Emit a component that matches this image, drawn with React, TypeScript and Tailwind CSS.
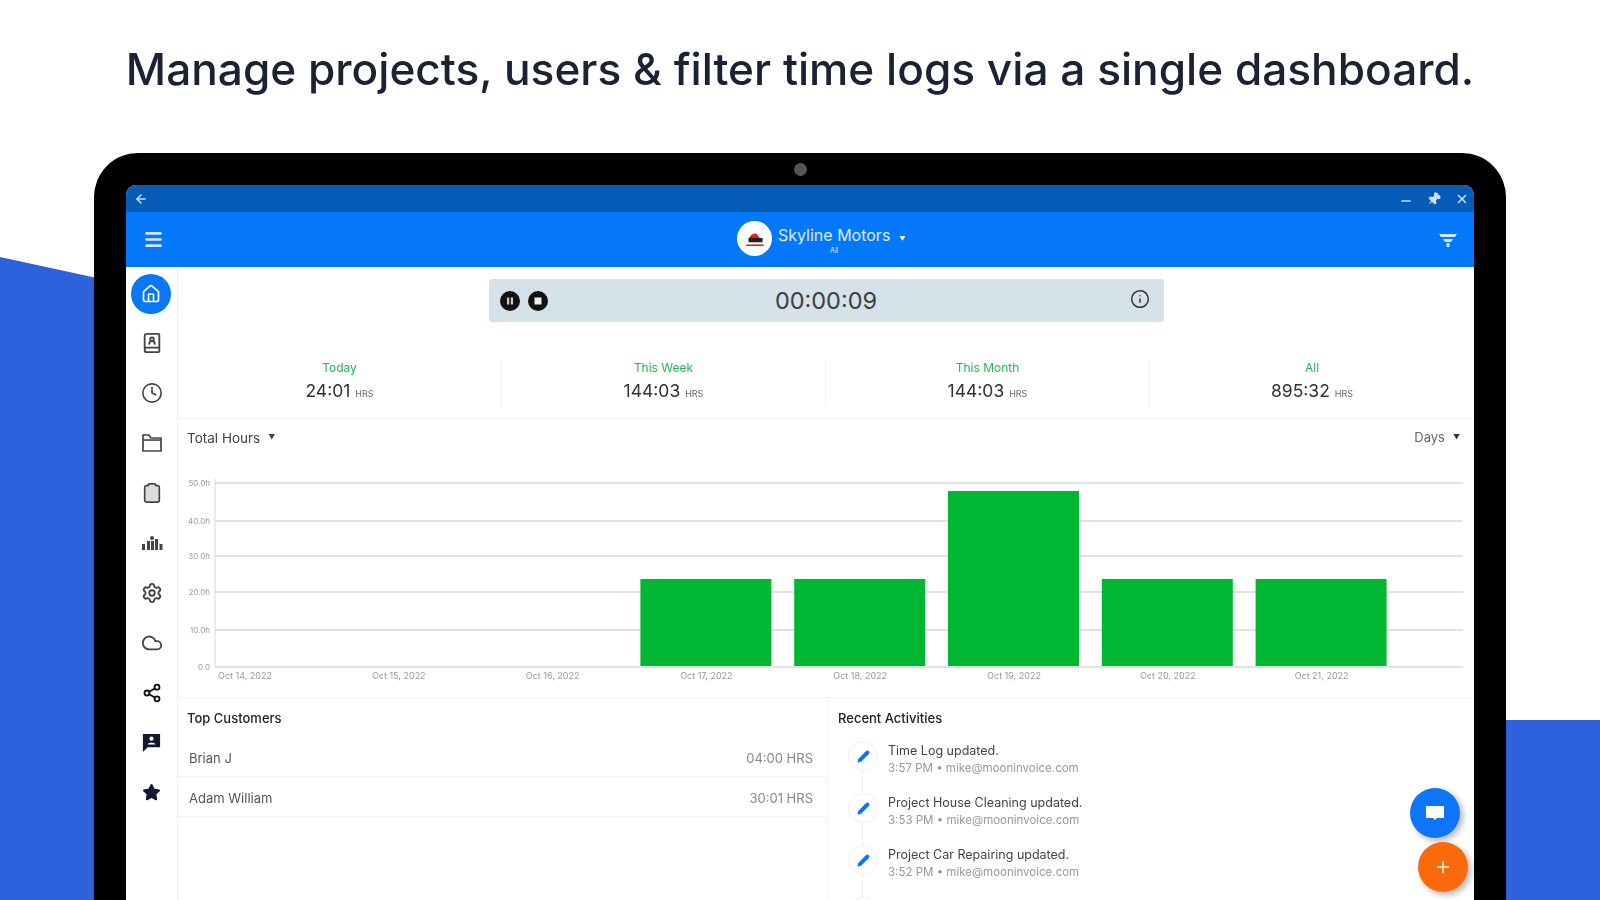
import { ArrowLeft, BookUser, Cloud, Clipboard, Clock, Home, Info, Menu, Minus, Pencil, Pin, Plus, Settings, Share2, Star, X } from "lucide-react";

const stats = [
  { label: "Today", value: "24:01" },
  { label: "This Week", value: "144:03" },
  { label: "This Month", value: "144:03" },
  { label: "All", value: "895:32" },
];
const gridLines = [
  { y: 14, label: "50.0h" },
  { y: 52, label: "40.0h" },
  { y: 87, label: "30.0h" },
  { y: 123, label: "20.0h" },
  { y: 161, label: "10.0h" },
  { y: 198, label: "0.0" },
];
const days = [
  { label: "Oct 14, 2022", hours: 0 },
  { label: "Oct 15, 2022", hours: 0 },
  { label: "Oct 16, 2022", hours: 0 },
  { label: "Oct 17, 2022", hours: 87 },
  { label: "Oct 18, 2022", hours: 87 },
  { label: "Oct 19, 2022", hours: 175 },
  { label: "Oct 20, 2022", hours: 87 },
  { label: "Oct 21, 2022", hours: 87 },
];
const activities = [
  { title: "Time Log updated.", time: "3:57 PM" },
  { title: "Project House Cleaning updated.", time: "3:53 PM" },
  { title: "Project Car Repairing updated.", time: "3:52 PM" },
];

function Sidebar() {
  return (
    <aside className="w-[52px] shrink-0 border-r border-[#f1f1f1] flex flex-col items-center pt-[6px] text-[#444]">
      <div className="h-10 w-10 rounded-full bg-[#0a78f5] flex items-center justify-center mb-[18px] mt-[1px] mr-[1px]">
        <Home className="h-5 w-5 text-white" strokeWidth={2} />
      </div>
      <div className="flex flex-col items-center gap-[28px]">
        <BookUser className="h-[22px] w-[22px]" strokeWidth={2} />
        <Clock className="h-[22px] w-[22px]" strokeWidth={1.8} />
        <svg viewBox="0 0 22 22" className="h-[22px] w-[22px]" fill="none" stroke="#444" strokeWidth="1.7">
          <path d="M2 19V3h6l2 3h10v13z" />
          <path d="M2 8h18" />
        </svg>
        <Clipboard className="h-[22px] w-[22px]" fill="#ddd" strokeWidth={1.8} />
        <svg viewBox="0 0 22 22" className="h-[22px] w-[22px]" fill="#444">
          <rect x="1" y="12" width="3" height="6" />
          <rect x="6" y="9" width="3" height="9" />
          <circle cx="11" cy="6" r="2" />
          <rect x="10" y="9" width="3" height="9" />
          <rect x="14" y="7" width="3" height="11" />
          <rect x="18.5" y="12" width="3" height="6" />
        </svg>
        <Settings className="h-[22px] w-[22px]" strokeWidth={2} />
        <Cloud className="h-[22px] w-[22px]" strokeWidth={2} />
        <Share2 className="h-[20px] w-[20px] my-[1px] text-[#111]" strokeWidth={2.2} />
        <svg viewBox="0 0 22 22" className="h-[21px] w-[21px]">
          <path d="M2 2h18v14H7l-5 5z" fill="#141832" />
          <circle cx="11" cy="7" r="2.2" fill="#fff" />
          <path d="M7 13c0-2.2 8-2.2 8 0z" fill="#fff" />
        </svg>
        <Star className="h-[19px] w-[19px] mt-[2px] text-[#141832]" fill="#141832" strokeWidth={1.5} />
      </div>
    </aside>
  );
}

function TimerBar() {
  return (
    <div className="mt-3 mx-auto w-[675px] h-[43px] rounded-[3px] bg-[#d5e2e9] flex items-center px-[11px] shrink-0">
      <div className="flex flex-1 gap-2">
        <svg viewBox="0 0 20 20" className="h-5 w-5">
          <circle cx="10" cy="10" r="10" fill="#111" />
          <rect x="7" y="6.5" width="2.2" height="7" fill="#ccc" />
          <rect x="10.8" y="6.5" width="2.2" height="7" fill="#ccc" />
        </svg>
        <svg viewBox="0 0 20 20" className="h-5 w-5">
          <circle cx="10" cy="10" r="10" fill="#111" />
          <rect x="6.5" y="6.5" width="7" height="7" fill="#eee" />
        </svg>
      </div>
      <span className="text-[23.5px] text-[#3c3f42]">00:00:09</span>
      <div className="flex flex-1 justify-end">
        <Info className="h-[20px] w-[20px] text-[#333] mr-[3px] mb-[4px]" strokeWidth={1.8} />
      </div>
    </div>
  );
}

function Stats() {
  return (
    <div className="grid grid-cols-4 h-[97px] shrink-0 border-b border-[#f2f2f2] pt-[38px]">
      {stats.map((s, i) => (
        <div key={s.label} className={i < 3 ? "border-r border-[#f3f3f3] flex flex-col items-center h-[46px]" : "flex flex-col items-center h-[46px]"}>
          <span className="text-[12px] leading-[16px] text-[#28b558]">{s.label}</span>
          <span className="text-[17.5px] leading-[24px] mt-[3px] text-[#333]">
            {s.value} <span className="text-[9px] text-[#666]">HRS</span>
          </span>
        </div>
      ))}
    </div>
  );
}

function HoursChart() {
  return (
    <section className="h-[279px] shrink-0 border-b border-[#f2f2f2] pt-[10px]">
      <div className="flex justify-between items-center pl-[9px] pr-[14px] h-[18px]">
        <span className="text-[13.5px] text-[#444] flex items-center gap-2">
          Total Hours <span className="text-[7px]">▼</span>
        </span>
        <span className="text-[13px] text-[#666] flex items-center gap-2">
          Days <span className="text-[7px] text-[#333]">▼</span>
        </span>
      </div>
      <svg width="1297" height="222" className="mt-[22px] block">
        <line x1="37" x2="37" y1="10" y2="198" stroke="#ececec" strokeWidth="2" />
        {gridLines.map((g) => (
          <g key={g.label}>
            <line x1="37" x2="1285" y1={g.y} y2={g.y} stroke="#d8d8d8" strokeWidth="1.5" />
            <text x="32" y={g.y + 3} textAnchor="end" fontSize="8" fill="#999">
              {g.label}
            </text>
          </g>
        ))}
        {days.map((d, i) => (
          <g key={d.label}>
            {d.hours > 0 && <rect x={1 + 153.8 * i} y={197 - d.hours} width="131" height={d.hours} fill="#00b733" />}
            <text x={67 + 153.8 * i} y="210" textAnchor="middle" fontSize="9" fill="#999">
              {d.label}
            </text>
          </g>
        ))}
      </svg>
    </section>
  );
}

function TopCustomers() {
  return (
    <div className="w-[650px] border-r border-[#f1f1f1] flex flex-col">
      <h3 className="pl-[9px] pt-[11px] pb-[10px] text-[13px] leading-[18px] font-medium text-[#222]">Top Customers</h3>
      {[
        { name: "Brian J", hrs: "04:00 HRS" },
        { name: "Adam William", hrs: "30:01 HRS" },
      ].map((c) => (
        <div key={c.name} className="h-[40px] pt-[4px] border-b border-[#f3f3f3] flex items-center justify-between pl-[11px] pr-[14px] text-[13px] text-[#555]">
          <span>{c.name}</span>
          <span className="text-[#888]">{c.hrs}</span>
        </div>
      ))}
    </div>
  );
}

function TimelineDot() {
  return (
    <div className="mt-[6px] ml-[10px] h-[30px] w-[30px] shrink-0 rounded-full border border-[#efefef] bg-white flex items-center justify-center">
      <Pencil className="h-[13px] w-[13px] text-[#0a78f5]" fill="#0a78f5" />
    </div>
  );
}

function RecentActivities() {
  return (
    <div className="flex-1 pl-[10px]">
      <h3 className="pt-[11px] text-[13px] leading-[18px] font-medium text-[#222]">Recent Activities</h3>
      <div className="mt-[8px] flex flex-col">
        {activities.map((a) => (
          <div key={a.time} className="h-[52px] flex gap-[10px] relative">
            <div className="absolute left-[24px] top-[36px] h-[22px] w-[1px] bg-[#f0f0f0]" />
            <TimelineDot />
            <div className="pt-[7px]">
              <p className="text-[12.5px] leading-[18px] text-[#444]">{a.title}</p>
              <p className="text-[11.5px] leading-[17px] text-[#999]">{a.time} • mike@mooninvoice.com</p>
            </div>
          </div>
        ))}
        <TimelineDot />
      </div>
    </div>
  );
}

export default function App() {
  return (
    <div className="relative h-[900px] w-[1600px] overflow-hidden bg-white font-['Inter',sans-serif]">
      {/* background shapes behind the tablet */}
      <div className="absolute left-0 top-[257px] h-[643px] w-[120px] bg-[#2d62dc] [clip-path:polygon(0_0,100%_26px,100%_100%,0_100%)]" />
      <div className="absolute right-0 top-[720px] h-[180px] w-[120px] bg-[#2d62dc]" />

      <h1 className="relative h-[153px] pt-[41px] text-center text-[44.2px] leading-[56px] font-[550] text-[#1a2233] blur-[0.4px]">
        Manage projects, users &amp; filter time logs via a single dashboard.
      </h1>

      <div className="relative mx-[94px] h-[770px] rounded-t-[44px] bg-black px-[32px] pt-[32px] flex flex-col blur-[0.4px]">
        <div className="absolute left-1/2 top-[10px] -ml-[6px] h-[13px] w-[13px] rounded-full bg-[#555]" />
        <div className="flex-1 rounded-t-[10px] overflow-hidden bg-white flex flex-col min-h-0 blur-[0.7px]">
          <div className="h-[27px] bg-[#045bb8] flex items-center justify-between pl-[8px] pr-[5px] text-[#c8defa] shrink-0">
            <ArrowLeft className="h-3.5 w-3.5" strokeWidth={2.5} />
            <div className="flex items-center gap-[14px]">
              <Minus className="h-3.5 w-3.5 mt-[4px]" strokeWidth={2.5} />
              <Pin className="h-3.5 w-3.5 rotate-45" fill="#c8defa" />
              <X className="h-3.5 w-3.5" strokeWidth={2.5} />
            </div>
          </div>
          <header className="h-[55px] bg-[#0478fb] shrink-0 flex items-center justify-between pl-[17px] pr-[16px] text-white relative">
            <Menu className="h-[21px] w-[21px] text-[#d5e5fb]" strokeWidth={3} />
            <div className="absolute left-[611px] top-[9px] flex">
              <div className="h-[35px] w-[35px] rounded-full bg-white flex items-center justify-center">
                <svg viewBox="0 0 24 24" className="h-[26px] w-[26px]">
                  <path d="M6 13c1-4 3-6 7-6l5 6z" fill="#d22" />
                  <rect x="6" y="11" width="13" height="4" fill="#222" />
                  <rect x="4" y="17" width="16" height="1.5" fill="#d22" />
                </svg>
              </div>
              <div className="ml-[6px] mt-[2px] flex flex-col items-center">
                <span className="text-[16px] leading-[24px] text-[#dcebfd]">Skyline Motors</span>
                <span className="text-[7px] leading-[8px] text-[#dcebfd]">All</span>
              </div>
              <span className="ml-[9px] mt-[13px] text-[6px] leading-[10px]">▼</span>
            </div>
            <svg viewBox="0 0 20 20" className="h-5 w-5 mb-[-1px]" fill="#d5e5fb">
              <path d="M1 4h18l-2 3H3zM5 9h10l-2 3H7zM8.5 13h3v4h-3z" />
            </svg>
          </header>
          <div className="flex flex-1 min-h-0">
            <Sidebar />
            <main className="flex-1 flex flex-col min-w-0">
              <TimerBar />
              <Stats />
              <HoursChart />
              <div className="flex flex-1 min-h-0 overflow-hidden">
                <TopCustomers />
                <RecentActivities />
              </div>
            </main>
          </div>
        </div>
        <button className="absolute left-[1316px] top-[635px] h-[50px] w-[50px] rounded-full bg-[#0d75f8] shadow-[3px_3px_6px_rgba(0,0,0,0.3)] flex items-center justify-center">
          <svg viewBox="0 0 20 20" className="h-[20px] w-[20px]" fill="#fff">
            <path d="M1 3h18v12h-7l-2 2-2-2H1z" />
          </svg>
        </button>
        <button className="absolute left-[1324px] top-[689px] h-[50px] w-[50px] rounded-full bg-[#fa6a0a] shadow-[3px_3px_6px_rgba(0,0,0,0.3)] flex items-center justify-center">
          <Plus className="h-[18px] w-[18px] text-[#ffe3cc]" strokeWidth={2.5} />
        </button>
      </div>
    </div>
  );
}
